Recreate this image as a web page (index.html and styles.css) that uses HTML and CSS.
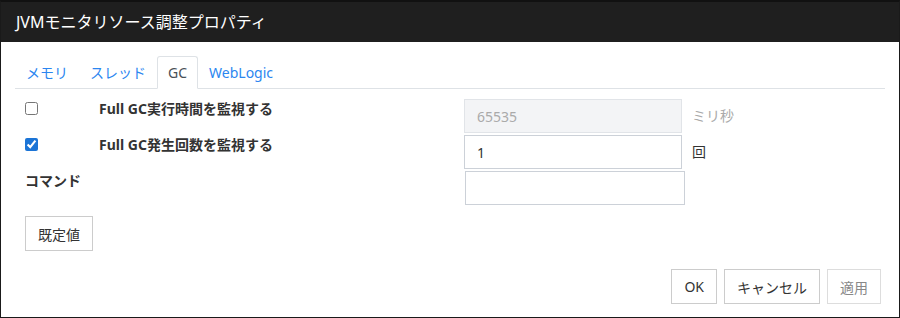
FILE: index.html
```html
<!DOCTYPE html>
<html lang="ja">
<head>
<meta charset="utf-8">
<title>JVMモニタリソース調整プロパティ</title>
<link rel="stylesheet" href="styles.css">
</head>
<body>
<div class="dialog">
  <div class="header">JVMモニタリソース調整プロパティ</div>
  <div class="content">
    <ul class="tabs">
      <li><a class="tab">メモリ</a></li>
      <li><a class="tab">スレッド</a></li>
      <li><a class="tab active">GC</a></li>
      <li><a class="tab">WebLogic</a></li>
    </ul>
    <div class="form">
      <div class="row">
        <div class="check"><input type="checkbox"></div>
        <div class="label">Full GC実行時間を監視する</div>
        <input class="field" type="text" value="65535" disabled>
        <div class="unit muted">ミリ秒</div>
      </div>
      <div class="row">
        <div class="check"><input type="checkbox" checked></div>
        <div class="label">Full GC発生回数を監視する</div>
        <input class="field" type="text" value="1">
        <div class="unit">回</div>
      </div>
      <div class="row last">
        <div class="label wide">コマンド</div>
        <input class="field cmd" type="text" value="">
      </div>
    </div>
    <div class="defaults"><button class="btn">既定値</button></div>
    <div class="footer">
      <button class="btn">OK</button>
      <button class="btn">キャンセル</button>
      <button class="btn disabled">適用</button>
    </div>
  </div>
</div>
</body>
</html>
```
FILE: styles.css
```css
* { box-sizing: border-box; }
html, body { margin: 0; padding: 0; background: #fff; }
body {
  font-family: "Noto Sans", "Noto Sans CJK JP", sans-serif;
  font-size: 14px;
  color: #333;
}
.dialog {
  width: 900px;
  height: 318px;
  border: 1px solid #1a1a1a;
  border-top: 2px solid #111;
  background: #fff;
}
.header {
  height: 40px;
  background: #1f1f1f;
  color: #fff;
  font-size: 16px;
  line-height: 40px;
  padding-left: 15px;
}
.content {
  padding: 14px 14px 0 14px;
}
.tabs {
  list-style: none;
  margin: 0;
  padding: 0;
  display: flex;
  border-bottom: 1px solid #dee2e6;
}
.tab {
  display: block;
  padding: 0 10px;
  line-height: 31px;
  border: 1px solid transparent;
  border-radius: 3px 3px 0 0;
  margin-bottom: -1px;
  color: #2b86f0;
}
.tab.active {
  color: #495057;
  background: #fff;
  border-color: #dee2e6 #dee2e6 #fff;
}
.form { margin-top: 10px; }
.row {
  display: flex;
  align-items: flex-start;
  height: 34px;
  margin-bottom: 2px;
}
.row.last { margin-bottom: 0; }
.check {
  width: 84px;
  padding-left: 10px;
}
.check input {
  margin: 3px 0 0 0;
  width: 13px;
  height: 13px;
  accent-color: #1b74d6;
}
.label {
  width: 365px;
  font-weight: bold;
  line-height: 20px;
}
.label.wide {
  width: 449px;
  padding-left: 10px;
}
.field {
  width: 218px;
  height: 34px;
  border: 1px solid #ccd1d8;
  background: #fff;
  padding: 0 12px;
  font-family: inherit;
  font-size: 14px;
  color: #333;
  outline: none;
  margin: 0;
}
.field:disabled {
  background: #f3f4f6;
  border-color: #e1e4e8;
  color: #aaa;
  -webkit-text-fill-color: #aaa;
}
.field.cmd {
  width: 220px;
  margin-left: 1px;
}
.unit {
  margin-left: 10px;
  line-height: 34px;
  color: #333;
}
.unit.muted { color: #aaa; }
.defaults {
  margin-top: 11px;
  padding-left: 10px;
}
.btn {
  height: 35px;
  padding: 0 12px;
  border: 1px solid #ccc;
  background: #fff;
  font-family: inherit;
  font-size: 14px;
  color: #333;
  margin: 0;
}
.btn.disabled {
  color: #888;
  border-color: #ddd;
}
.footer {
  margin-top: 18px;
  display: flex;
  justify-content: flex-end;
  gap: 7px;
  padding-right: 4px;
}
```
